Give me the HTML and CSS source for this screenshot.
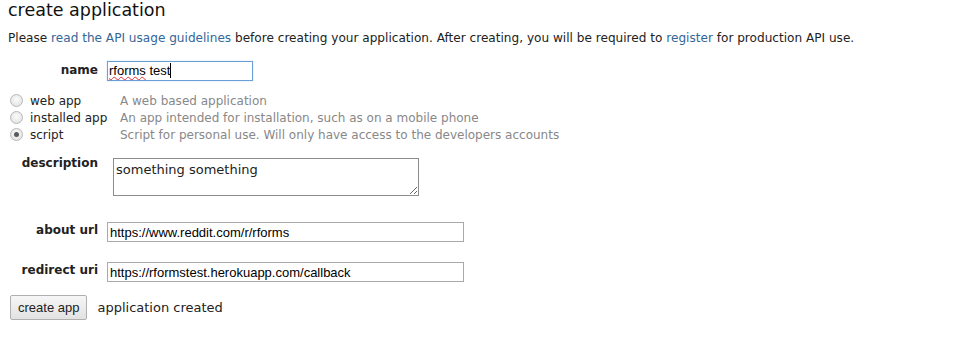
FILE: index.html
```html
<!DOCTYPE html>
<html>
<head>
<meta charset="utf-8">
<link rel="stylesheet" href="styles.css">
</head>
<body>
<h1 class="title">create application</h1>
<p class="intro">Please <a href="#">read the API usage guidelines</a> before creating your application. After creating, you will be required to <a href="#">register</a> for production API use.</p>
<div class="row row-name">
  <label class="lbl">name</label>
  <div class="field name-field"><span class="typo">rforms</span> test<span class="caret"></span></div>
</div>
<div class="types">
  <div class="type"><span class="radio"></span><span class="tname">web app</span><span class="tdesc">A web based application</span></div>
  <div class="type"><span class="radio"></span><span class="tname">installed app</span><span class="tdesc">An app intended for installation, such as on a mobile phone</span></div>
  <div class="type"><span class="radio on"></span><span class="tname">script</span><span class="tdesc">Script for personal use. Will only have access to the developers accounts</span></div>
</div>
<div class="row row-desc">
  <label class="lbl">description</label>
  <textarea class="area">something something</textarea>
</div>
<div class="row row-about">
  <label class="lbl">about url</label>
  <input class="field url-field" type="text" value="https://www.reddit.com/r/rforms">
</div>
<div class="row row-redirect">
  <label class="lbl">redirect uri</label>
  <input class="field url-field" type="text" value="https://rformstest.herokuapp.com/callback">
</div>
<div class="actions">
  <button class="btn">create app</button>
  <span class="status">application created</span>
</div>
</body>
</html>
```
FILE: styles.css
```css
body {
  margin: 0 8px;
  font-family: "DejaVu Sans", Verdana, sans-serif;
  color: #222;
  background: #fff;
}
.title {
  font-size: 17.5px;
  font-weight: normal;
  margin: 0;
  line-height: 20px;
  color: #111;
}
.intro {
  font-size: 12.1px;
  margin: 10px 0 0 0;
  line-height: 16px;
}
.intro a { color: #369; text-decoration: none; }
.row {
  display: flex;
  align-items: flex-start;
}
.lbl {
  width: 90px;
  text-align: right;
  font-weight: bold;
  font-size: 12px;
  color: #222;
}
.row-name { margin-top: 15px; }
.row-name .lbl { padding-top: 2px; }
.field {
  font-family: "Liberation Sans", Arial, sans-serif;
  font-size: 13px;
  height: 20px;
  line-height: 18px;
  box-sizing: border-box;
  border: 1px solid #a9a9a9;
  padding: 0 2px;
  margin: 0 0 0 9px;
  color: #000;
  outline: none;
}
.name-field {
  width: 146px;
  border: 1px solid #6a9fd8;
  box-shadow: 0 0 1px #9cc3ea;
  padding-left: 1px;
}
.typo {
  text-decoration: underline wavy #e0303a;
  text-decoration-thickness: 1px;
  text-decoration-skip-ink: none;
  text-underline-offset: 1px;
}
.caret {
  display: inline-block;
  width: 1px;
  height: 15px;
  background: #000;
  vertical-align: -3px;
}
.url-field { width: 357px; }
.types { margin-top: 11px; }
.type {
  display: flex;
  align-items: center;
  height: 17px;
  font-size: 12px;
}
.radio {
  width: 13px;
  height: 13px;
  border-radius: 50%;
  border: 1px solid #b8b8b8;
  background: radial-gradient(circle at 50% 40%, #fbfbfb, #dedede);
  box-sizing: border-box;
  margin: 0 7px 0 2px;
  position: relative;
}
.radio.on::after {
  content: "";
  position: absolute;
  left: 3px; top: 3px;
  width: 5px; height: 5px;
  border-radius: 50%;
  background: #5a5a5a;
}
.tname { width: 90px; color: #222; }
.tdesc { color: #888; }
.row-desc { margin-top: 15px; }
.row-desc .lbl { margin-top: -2px; }
.area {
  margin: 0 0 0 15px;
  width: 306px;
  height: 38px;
  box-sizing: border-box;
  border: 1px solid #8c8c8c;
  font-family: "DejaVu Sans", Verdana, sans-serif;
  font-size: 13px;
  padding: 3px 2px 1px;
  resize: vertical;
  color: #222;
}
.row-about { margin-top: 26px; }
.row-about .lbl, .row-redirect .lbl { padding-top: 1px; }
.row-redirect { margin-top: 20px; }
.actions {
  margin-top: 13px;
  display: flex;
  align-items: center;
  margin-left: 2px;
}
.btn {
  font-family: "Liberation Sans", Arial, sans-serif;
  font-size: 13px;
  height: 25px;
  padding: 0 7px;
  border: 1px solid #b0b0b0;
  border-radius: 2px;
  background: linear-gradient(#f6f6f6, #e2e2e2);
  color: #222;
}
.status { margin-left: 10px; font-size: 13px; color: #222; }
```
